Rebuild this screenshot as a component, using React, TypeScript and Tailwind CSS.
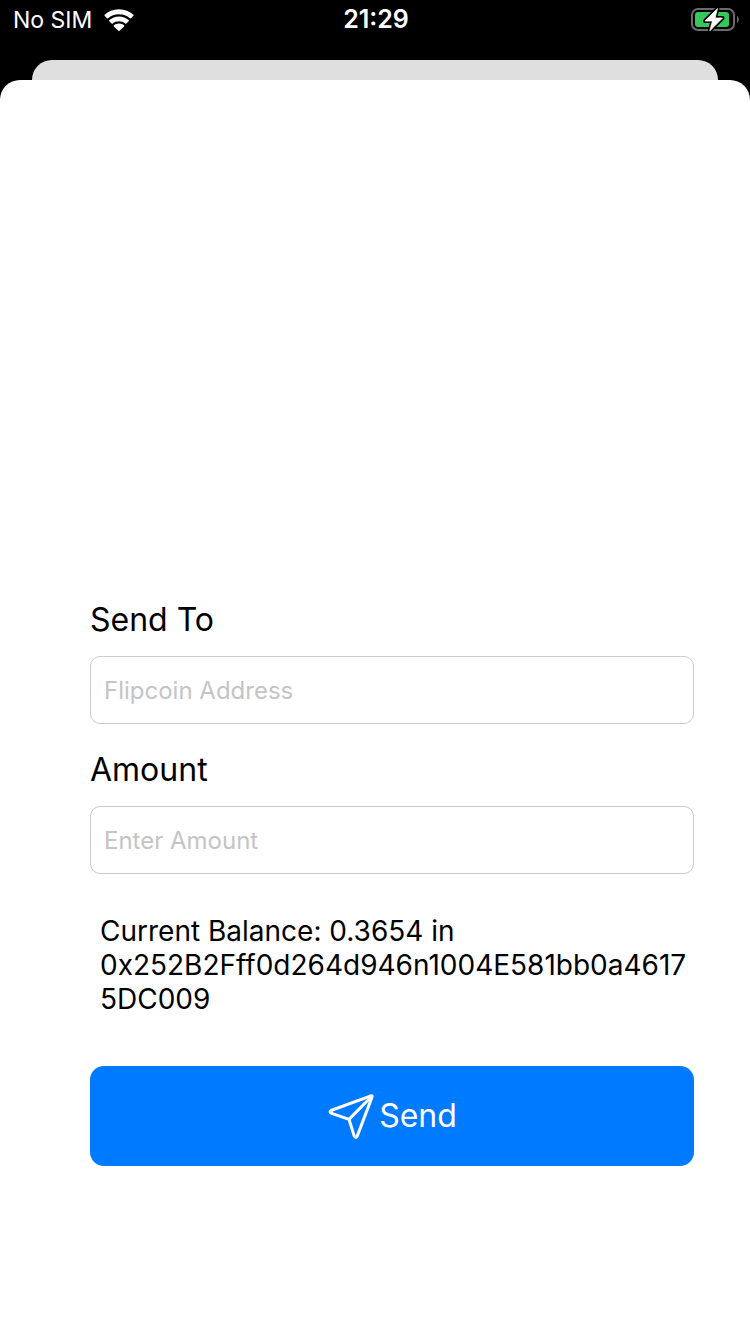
import { FC, useState } from "react";

type fieldProps = {
  id: string;
  label: string;
  placeholder: string;
  value: string;
  onChange: (_value: string) => void;
};

const WifiIcon: FC = () => (
  <svg aria-hidden="true" className="h-6 w-8" fill="#fff" viewBox="0 0 32 24">
    <path d="M16 1.2C10.300 1.200 5.200 3.300 1.600 6.700a.8.8 0 0 0 0 1.100l2.400 2.500a.8.8 0 0 0 1.100 0C8 7.700 11.800 6.200 16 6.200s8 1.500 10.900 4.100a.8.8 0 0 0 1.100 0l2.400-2.500a.8.8 0 0 0 0-1.100C26.800 3.300 21.700 1.200 16 1.200z" />
    <path d="M16 8.400c-3.700 0-7.200 1.400-9.700 3.700a.8.8 0 0 0 0 1.100l2.400 2.400a.8.8 0 0 0 1.100 0c1.600-1.500 3.800-2.300 6.200-2.300s4.600.8 6.200 2.300a.8.8 0 0 0 1.100 0l2.400-2.400a.8.8 0 0 0 0-1.100C23.200 9.800 19.700 8.400 16 8.400z" />
    <path d="M16 15.400c-2 0-3.800.7-5.100 1.800a.8.8 0 0 0 0 1.200l4.500 4.400a.8.8 0 0 0 1.200 0l4.500-4.400a.8.8 0 0 0 0-1.200c-1.300-1.100-3.100-1.800-5.100-1.800z" />
  </svg>
);

const BatteryIcon: FC = () => (
  <svg
    aria-hidden="true"
    className="h-6 w-12 overflow-visible"
    fill="none"
    viewBox="0 0 48 24"
  >
    <rect
      height="21"
      rx="6"
      stroke="#6b6b6d"
      strokeWidth="2"
      width="42"
      x="1"
      y="1"
    />
    <rect fill="#34c759" height="15" rx="3" width="34" x="4" y="4" />
    <path d="M46 8c2.300 1.200 2.300 5.800 0 7z" fill="#6b6b6d" />
    <path
      d="M26.500 .500L14 13h7.500L18.800 22.800 31.500 10h-7.500z"
      fill="#fff"
      stroke="#000"
      strokeLinejoin="round"
      strokeWidth="4"
    />
    <path
      d="M26.500 .500L14 13h7.500L18.800 22.800 31.500 10h-7.500z"
      fill="#fff"
      stroke="#fff"
      strokeLinejoin="round"
      strokeWidth=".8"
    />
  </svg>
);

const PaperPlaneIcon: FC = () => (
  <svg
    aria-hidden="true"
    className="size-12"
    fill="none"
    stroke="#fff"
    strokeLinejoin="round"
    strokeWidth="3"
    viewBox="0 0 48 48"
  >
    <path d="M4 18.500L43.800 3.900Q45.600 3.300 45 5.100L30.200 44.300Q28.700 46.500 27.300 44.300L22 27.400L4 21.100Q2 19.800 4 18.500z" />
    <path d="M22 27.400L45 4" />
  </svg>
);

const StatusBar: FC = () => (
  <header className="grid h-10 grid-cols-3 items-center pr-[11px] pl-[13px] text-[23px] text-white">
    <div className="flex items-center gap-[11px]">
      <span>No SIM</span>
      <WifiIcon />
    </div>
    <time className="text-center text-[25px] font-semibold">21:29</time>
    <div className="flex justify-end">
      <BatteryIcon />
    </div>
  </header>
);

const Field: FC<fieldProps> = ({ id, label, placeholder, value, onChange }) => (
  <div className="flex flex-col gap-[14px]">
    <label className="text-[32px] leading-[44px]" htmlFor={id}>
      {label}
    </label>
    <input
      className="h-[68px] w-full rounded-[10px] border border-[#cbcbcb] px-[13px] text-2xl outline-none placeholder:text-[#c4c4c6]"
      id={id}
      onChange={(e) => onChange(e.target.value)}
      placeholder={placeholder}
      type="text"
      value={value}
    />
  </div>
);

const App: FC = () => {
  const [address, setAddress] = useState<string>("");
  const [amount, setAmount] = useState<string>("");

  return (
    <div className="flex min-h-screen flex-col bg-black font-[Inter,'Liberation_Sans',sans-serif] text-black">
      <StatusBar />
      <div className="mx-8 mt-5 h-5 rounded-t-[20px] bg-[#dfdfdf]" />
      <main className="flex grow flex-col justify-end rounded-t-[20px] bg-white pr-14 pb-[168px] pl-[90px]">
        <form
          className="flex flex-col gap-6"
          onSubmit={(e) => e.preventDefault()}
        >
          <Field
            id="address"
            label="Send To"
            onChange={setAddress}
            placeholder="Flipcoin Address"
            value={address}
          />
          <Field
            id="amount"
            label="Amount"
            onChange={setAmount}
            placeholder="Enter Amount"
            value={amount}
          />
          <p className="mt-4 mb-[26px] pl-[10px] text-[28px] leading-[34px] break-words">
            Current Balance: 0.3654 in 0x252B2Fff0d264d946n1004E581bb0a46175DC009
          </p>
          <button
            className="flex h-[100px] items-center justify-center gap-1 rounded-[14px] bg-[#007aff] text-[32px] text-white"
            type="submit"
          >
            <PaperPlaneIcon />
            Send
          </button>
        </form>
      </main>
    </div>
  );
};

export default App;
